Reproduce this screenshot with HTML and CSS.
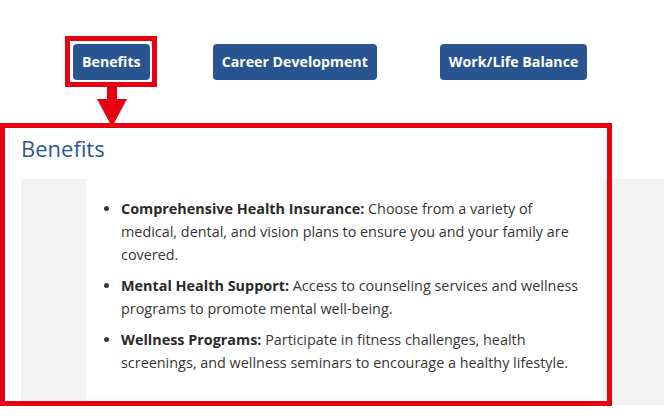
FILE: index.html
```html
<!DOCTYPE html>
<html lang="en">
<head>
<meta charset="utf-8">
<title>Benefits</title>
<link rel="stylesheet" href="styles.css">
</head>
<body>
<nav class="tabs">
  <button class="tab">Benefits</button>
  <button class="tab">Career Development</button>
  <button class="tab">Work/Life Balance</button>
</nav>
<section class="panel">
  <h2 class="panel-title">Benefits</h2>
  <div class="band">
    <div class="card">
      <ul class="list">
        <li><strong>Comprehensive Health Insurance:</strong> Choose from a variety of medical, dental, and vision plans to ensure you and your family are covered.</li>
        <li><strong>Mental Health Support:</strong> Access to counseling services and wellness programs to promote mental well-being.</li>
        <li><strong>Wellness Programs:</strong> Participate in fitness challenges, health screenings, and wellness seminars to encourage a healthy lifestyle.</li>
      </ul>
    </div>
  </div>
</section>
<div class="hl hl-tab"></div>
<div class="arrow"><span class="arrow-stem"></span><span class="arrow-head"></span></div>
<div class="hl hl-panel"></div>
</body>
</html>
```
FILE: styles.css
```css
html, body {
  margin: 0;
  padding: 0;
  background: #fff;
  overflow: hidden;
}
body {
  font-family: "Open Sans", "Liberation Sans", sans-serif;
  color: #333;
  position: relative;
  width: 664px;
  height: 418px;
}
.tabs {
  display: flex;
  gap: 63px;
  padding: 44px 0 0 73px;
}
.tab {
  height: 36px;
  padding: 0 9px;
  border: 0;
  border-radius: 4px;
  background: #285592;
  color: #fff;
  font-family: "Open Sans", "Liberation Sans", sans-serif;
  font-weight: 700;
  font-size: 14.2px;
  line-height: 36px;
}
.panel {
  padding-top: 53px;
}
.panel-title {
  margin: 0 0 16px 21px;
  font-size: 22px;
  font-weight: 400;
  color: #2b5797;
  line-height: 30px;
}
.band {
  margin-left: 21px;
  padding-left: 65px;
  background: #f3f3f3;
  height: 226px;
}
.card {
  width: 517px;
  height: 226px;
  box-sizing: border-box;
  background: #fff;
  padding: 18px 20px 0 35px;
}
.list {
  margin: 0;
  padding: 0;
  font-size: 14.4px;
  line-height: 23px;
  color: #363636;
}
.list li {
  margin-bottom: 8px;
}
.list strong {
  color: #2a2a2a;
  font-weight: 700;
}
.hl {
  position: absolute;
  border: 5px solid #e60012;
  box-sizing: border-box;
}
.hl-tab {
  left: 65px;
  top: 36px;
  width: 92px;
  height: 51px;
}
.hl-panel {
  left: 0;
  top: 123px;
  width: 612px;
  height: 283px;
}
.arrow {
  position: absolute;
  left: 97px;
  top: 87px;
  width: 30px;
  display: flex;
  flex-direction: column;
  align-items: center;
}
.arrow-stem {
  width: 10px;
  height: 12px;
  background: #e60012;
}
.arrow-head {
  width: 0;
  height: 0;
  border-left: 15px solid transparent;
  border-right: 15px solid transparent;
  border-top: 28px solid #e60012;
}
```
